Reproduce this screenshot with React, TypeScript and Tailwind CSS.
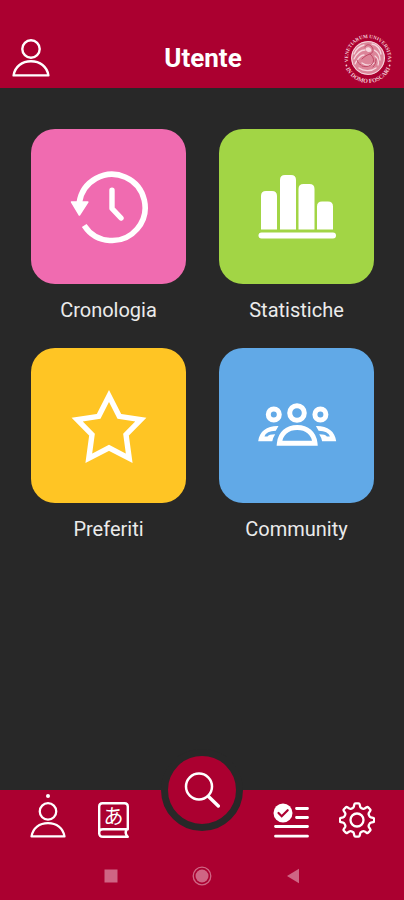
import React from "react";

type IconProps = { className?: string };

const UserIcon = ({ className }: IconProps) => (
  <svg viewBox="0 0 38 38" className={className} fill="none" stroke="currentColor" strokeWidth="2.4">
    <circle cx="19" cy="10" r="8.7" />
    <path d="M1.6 36.4C3 27.5 10 22.3 19 22.3s16 5.2 17.4 14.1z" strokeLinejoin="round" />
  </svg>
);

const SealLogo = ({ className }: IconProps) => (
  <svg viewBox="0 0 52 52" className={className} role="img" aria-label="Università Ca' Foscari Venezia">
    <defs>
      <path id="sealTop" d="M6.6 31A20 20 0 1 1 45.4 31" />
      <path id="sealBottom" d="M3.6 36A24.2 24.2 0 0 0 48.4 36" />
    </defs>
    <g fill="#f3ccd5" fontFamily="Liberation Serif, serif" fontSize="5" fontWeight="bold">
      <text textAnchor="middle">
        <textPath href="#sealTop" startOffset="50%">VENETIARUM UNIVERSITAS</textPath>
      </text>
      <text textAnchor="middle" fontSize="6">
        <textPath href="#sealBottom" startOffset="50%">IN DOMO FOSCARI</textPath>
      </text>
      <circle cx="4.4" cy="33.5" r=".9" />
      <circle cx="47.6" cy="33.5" r=".9" />
    </g>
    <circle cx="26" cy="26" r="17" fill="#dc8599" />
    <g fill="none" stroke="#f6d7de" strokeWidth="1.3" strokeLinecap="round">
      <circle cx="26" cy="26" r="16.4" strokeWidth="1" />
      <path d="M12 22c2-5 6-8 10-9M12 27c3-6 7-9 11-9M13 32c3-6 6-9 9-9M30 12c5 1 8 5 9 10M32 18c4 2 6 6 6 10M33 24c3 2 4 6 3 9" />
      <path d="M17 36c4 3 12 4 17 0M20 31c4 3 9 3 12 0" />
    </g>
    <g fill="none" stroke="#c04a67" strokeWidth="1" strokeLinecap="round">
      <path d="M23 15c1-3 5-3 7 0s1 6-2 7-5 2-8 5M28 22c4 3 5 8 1 11-3 2-7 2-9 1M34 27c0 4-1 6-3 8M15 28c1 3 2 4 4 5" />
    </g>
    <path d="M24 16c1-1 4-1 5 1s0 3-2 3-4-2-3-4z" fill="#f6d7de" />
  </svg>
);

const HistoryIcon = ({ className }: IconProps) => (
  <svg viewBox="0 0 80 80" className={className} fill="none" stroke="currentColor" strokeLinecap="round" strokeLinejoin="round">
    <path d="M10.2 36A33.1 33.1 0 1 1 15.2 58.4" strokeWidth="5.6" strokeLinecap="butt" />
    <path d="M2.6 35h16.200L10.400 48z" fill="currentColor" strokeWidth="1.6" />
    <path d="M43 23.300V41.500L52 51" strokeWidth="5.400" />
  </svg>
);

const ChartIcon = ({ className }: IconProps) => (
  <svg viewBox="0 0 80 80" className={className} fill="currentColor">
    <path d="M4 62.500V29q0-5 5-5h6q5 0 5 5v33.500zM23 62.500V13q0-5 5-5h6q5 0 5 5v49.500zM41.500 62.500V22q0-5 5-5h6q5 0 5 5v40.500zM60 62.500V39.500q0-5 5-5h6q5 0 5 5v23z" />
    <rect x="1.500" y="65.500" width="77.500" height="6" rx="3" />
  </svg>
);

const StarIcon = ({ className }: IconProps) => (
  <svg viewBox="0 0 80 80" className={className} fill="none" stroke="currentColor" strokeWidth="5.400">
    <path d="M40 10L50.300 30.300L71.800 33.600L57 48.600L60.200 72.300L40 61.800L19.800 72.300L23 48.600L8.200 33.600L29.700 30.300z" />
  </svg>
);

const CommunityIcon = ({ className }: IconProps) => (
  <svg viewBox="0 0 80 80" className={className} fill="none" stroke="currentColor" strokeWidth="5">
    <circle cx="40" cy="27" r="7.300" />
    <circle cx="16.800" cy="28.500" r="5.500" />
    <circle cx="63.400" cy="28.500" r="5.500" />
    <path d="M22.400 57.200c1-10 8-15.700 17.800-15.700s16.800 5.700 17.800 15.700z" />
    <g fill="currentColor" stroke="none">
      <path id="sideBody" d="M1.200 55.200C2.500 45 10 39.700 21.500 40L18.800 44.800C12.500 45 8.600 47 7.500 50.500H10.500C11.500 48.800 14 48.300 18.200 48.200Q16 51.500 15.300 55.200z" />
      <use href="#sideBody" transform="translate(80.400 0) scale(-1 1)" />
    </g>
  </svg>
);

const DictionaryIcon = ({ className }: IconProps) => (
  <svg viewBox="0 0 36 36" className={className}>
    <path
      d="M3.200 32V4.500Q3.200 1.200 6.500 1.200H28.500Q31.800 1.200 31.800 4.500V27.200H7Q3.200 27.200 3.200 31Q3.200 34.800 7 34.800H31.800Q28 31 31 27.200"
      fill="none"
      stroke="currentColor"
      strokeWidth="2.400"
      strokeLinejoin="round"
    />
    <text x="17.500" y="21.800" textAnchor="middle" fontSize="20" fill="currentColor" fontFamily="Noto Sans CJK JP, sans-serif">
      あ
    </text>
  </svg>
);

const SearchIcon = ({ className }: IconProps) => (
  <svg viewBox="0 0 36 36" className={className} fill="none" stroke="currentColor" strokeLinecap="round">
    <circle cx="15" cy="14.500" r="13" strokeWidth="2.500" />
    <path d="M24.500 24.500l9.800 9.500" strokeWidth="3.400" />
  </svg>
);

const TaskListIcon = ({ className }: IconProps) => (
  <svg viewBox="0 0 36 36" className={className} fill="none" stroke="currentColor" strokeWidth="2.800" strokeLinecap="round">
    <circle cx="10" cy="11" r="9.500" fill="currentColor" stroke="none" />
    <path d="M5.500 11l3.200 3.200 6-6" className="stroke-[#ab0030]" strokeWidth="2.200" />
    <path d="M23.500 6.500h11M23.500 15.500h11M2.500 24.500h32M2.500 34.200h32" />
  </svg>
);

const GearIcon = ({ className }: IconProps) => (
  <svg viewBox="0 0 36 36" className={className} fill="none" stroke="currentColor" strokeWidth="2.300" strokeLinejoin="round">
    <circle cx="18" cy="18" r="6.500" />
    <path d="M16.500 1.400h3q1 0 1.200 1l.5 2.300q.2 1 1.200 1.400l1.400.6q1 .4 1.800-.1l2-1.300q.9-.6 1.600.1l1.900 1.900q.7.700.1 1.600l-1.300 2q-.5.900-.1 1.800l.6 1.400q.4 1 1.400 1.200l2.300.5q1 .2 1 1.200v2q0 1-1 1.200l-2.300.5q-1 .2-1.400 1.200l-.6 1.400q-.4 1 .1 1.800l1.300 2q.6.900-.1 1.600l-1.900 1.900q-.7.700-1.600.1l-2-1.300q-.9-.5-1.800-.1l-1.400.6q-1 .4-1.200 1.400l-.5 2.300q-.2 1-1.200 1h-3q-1 0-1.200-1l-.5-2.300q-.2-1-1.200-1.400l-1.400-.6q-1-.4-1.800.1l-2 1.300q-.9.600-1.600-.1l-1.900-1.900q-.7-.7-.1-1.600l1.300-2q.5-.9.100-1.800l-.6-1.400q-.4-1-1.400-1.200l-2.300-.5q-1-.2-1-1.200v-2q0-1 1-1.200l2.300-.5q1-.2 1.400-1.200l.6-1.400q.4-1-.1-1.800l-1.300-2q-.6-.9.100-1.600l1.900-1.900q.7-.7 1.600-.1l2 1.300q.9.500 1.800.1l1.400-.6q1-.4 1.200-1.400l.5-2.300q.2-1 1.200-1z" />
  </svg>
);

const TILES = [
  { label: "Cronologia", color: "bg-[#f06bb0]", Icon: HistoryIcon },
  { label: "Statistiche", color: "bg-[#a2d545]", Icon: ChartIcon },
  { label: "Preferiti", color: "bg-[#ffc524]", Icon: StarIcon },
  { label: "Community", color: "bg-[#61a9e7]", Icon: CommunityIcon },
];

export default function App() {
  return (
    <div className="min-h-screen flex flex-col bg-[#282828] font-[Roboto,sans-serif] text-white">
      <header className="flex items-center justify-between bg-[#ab0030] pt-7 pl-3 pr-2.5 h-22">
        <button aria-label="Profilo" className="w-13">
          <UserIcon className="size-[38px]" />
        </button>
        <h1 className="text-[26px] leading-8 font-bold">Utente</h1>
        <SealLogo className="size-13" />
      </header>

      <main className="grow grid grid-cols-2 content-start gap-x-[33px] gap-y-[22px] pl-[31px] pr-[30px] pt-[41px] pb-20">
        {TILES.map(({ label, color, Icon }) => (
          <button key={label} className="flex flex-col items-center gap-2.5">
            <span className={`w-full aspect-square rounded-3xl flex items-center justify-center ${color}`}>
              <Icon className="size-20" />
            </span>
            <span className="text-xl leading-8 text-[#ebebeb]">{label}</span>
          </button>
        ))}
      </main>

      <footer className="relative bg-[#ab0030] pt-3 pb-3.5">
        <nav className="flex justify-between pl-[30px] pr-[29px]">
          <div className="flex gap-[30px]">
            <button aria-label="Utente" aria-current="page" className="relative">
              <UserIcon className="size-9" />
              <span className="absolute -top-2 left-1/2 -translate-x-1/2 size-1 rounded-full bg-white" />
            </button>
            <button aria-label="Dizionario">
              <DictionaryIcon className="size-9" />
            </button>
          </div>
          <div className="flex gap-[30px]">
            <button aria-label="Esercizi">
              <TaskListIcon className="size-9" />
            </button>
            <button aria-label="Impostazioni">
              <GearIcon className="size-9" />
            </button>
          </div>
        </nav>

        <button
          aria-label="Cerca"
          className="absolute left-1/2 top-0 -translate-x-1/2 -translate-y-1/2 size-[82px] rounded-full border-[7px] border-[#282828] bg-[#ab0030] flex items-center justify-center"
        >
          <SearchIcon className="size-9" />
        </button>

        <div className="mt-7 flex justify-center gap-[71px] text-[#cf6584]">
          <button aria-label="Recenti">
            <svg viewBox="0 0 20 20" className="size-5" fill="currentColor">
              <rect x="3.500" y="3.500" width="13" height="13" />
            </svg>
          </button>
          <button aria-label="Home">
            <svg viewBox="0 0 20 20" className="size-5" fill="currentColor">
              <circle cx="10" cy="10" r="6.500" />
              <circle cx="10" cy="10" r="8.800" fill="none" stroke="currentColor" strokeWidth="1.300" />
            </svg>
          </button>
          <button aria-label="Indietro">
            <svg viewBox="0 0 20 20" className="size-5" fill="currentColor">
              <path d="M4 10l12-7.200v14.400z" />
            </svg>
          </button>
        </div>
      </footer>
    </div>
  );
}
